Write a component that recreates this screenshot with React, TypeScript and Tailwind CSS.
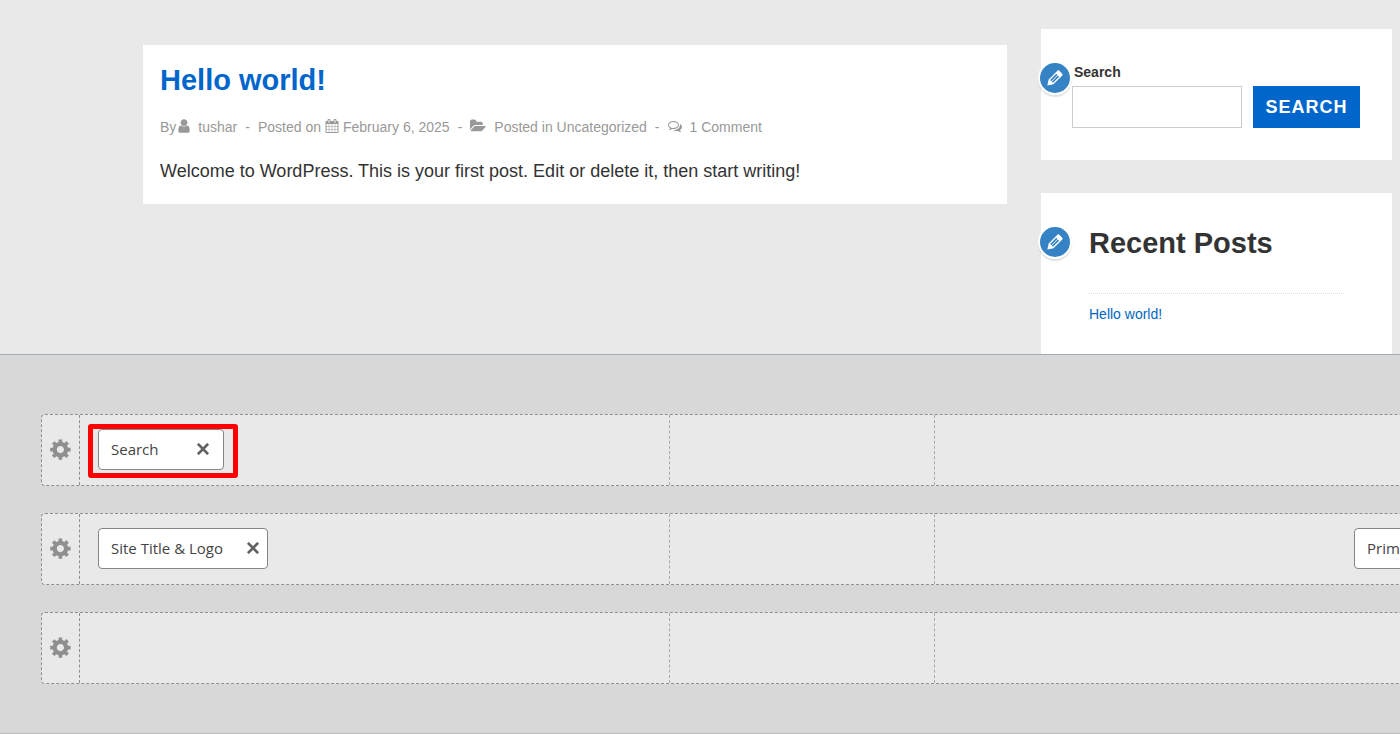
import type { ReactNode } from "react";
import clsx from "clsx";

function Icon({ path, size, box, className }: { path: string; size: number; box: string; className?: string }) {
  return (
    <svg viewBox={box} width={size} height={size} fill="currentColor" aria-hidden="true" className={clsx("shrink-0", className)}>
      <path d={path} />
    </svg>
  );
}

const META_BOX = "0 0 1792 1792";
const DASH_BOX = "0 0 20 20";

const USER =
  "M1536 1399q0 109-62.5 187t-150.5 78h-854q-88 0-150.5-78t-62.5-187q0-85 8.5-160.5t31.5-152 58.5-131 94-89 134.5-34.5q131 128 313 128t313-128q76 0 134.5 34.5t94 89 58.5 131 31.5 152 8.5 160.5zm-256-887q0 159-112.5 271.5t-271.5 112.5-271.5-112.5-112.5-271.5 112.5-271.5 271.5-112.5 271.5 112.5 112.5 271.5z";
const CALENDAR =
  "M192 1664h288v-288h-288v288zm352 0h320v-288h-320v288zm-352-352h288v-320h-288v320zm352 0h320v-320h-320v320zm-352-384h288v-288h-288v288zm736 736h320v-288h-320v288zm-384-736h320v-288h-320v288zm768 736h288v-288h-288v288zm-384-352h320v-320h-320v320zm-352-864v-288q0-13-9.5-22.5t-22.5-9.5h-64q-13 0-22.5 9.5t-9.5 22.5v288q0 13 9.5 22.5t22.5 9.5h64q13 0 22.5-9.5t9.5-22.5zm736 864h288v-320h-288v320zm-384-384h320v-288h-320v288zm384 0h288v-288h-288v288zm32-480v-288q0-13-9.5-22.5t-22.5-9.5h-64q-13 0-22.5 9.5t-9.5 22.5v288q0 13 9.5 22.5t22.5 9.5h64q13 0 22.5-9.5t9.5-22.5zm384-64v1280q0 52-38 90t-90 38h-1408q-52 0-90-38t-38-90v-1280q0-52 38-90t90-38h128v-96q0-66 47-113t113-47h64q66 0 113 47t47 113v96h384v-96q0-66 47-113t113-47h64q66 0 113 47t47 113v96h128q52 0 90 38t38 90z";
const FOLDER =
  "M1879 952q0 31-31 66l-336 396q-43 51-120.5 86.5t-143.5 35.5h-1088q-34 0-60.5-13t-26.5-43q0-31 31-66l336-396q43-51 120.5-86.5t143.5-35.5h1088q34 0 60.5 13t26.5 43zm-343-344v160h-832q-94 0-197 47.5t-164 119.5l-337 396-5 6q0-4-.5-12.5t-.5-12.5v-960q0-92 66-158t158-66h320q92 0 158 66t66 158v32h544q92 0 158 66t66 158z";
const COMMENTS =
  "M704 384q-153 0-286 52t-211.5 141-78.5 191q0 82 53 158t149 132l97 56-35 84q34-20 62-39l44-31 53 10q78 14 153 14 153 0 286-52t211.5-141 78.5-191-78.5-191-211.5-141-286-52zm0-128q191 0 353.5 68.5t256.5 186.5 94 257-94 257-256.5 186.5-353.5 68.5q-86 0-176-16-124 88-278 128-36 9-86 16h-3q-11 0-20.5-8t-11.5-21q-1-3-1-6.5t.5-6.5 2-6l2.5-5 3.5-5.5 4-5 4.5-5 4-4.5q5-6 23-25t26-29.5 22.5-29 25-38.5 20.5-44q-124-72-195-177t-71-224q0-139 94-257t256.5-186.5 353.5-68.5zm822 1169q10 24 20.5 44t25 38.5 22.5 29 26 29.5 23 25q1 1 4 4.5t4.5 5 4 5 3.5 5.5l2.5 5 2 6 .5 6.5-1 6.5q-3 14-13 22t-22 7q-50-7-86-16-154-40-278-128-90 16-176 16-271 0-472-132 58 4 88 4 161 0 309-45t264-129q125-92 192-212t67-254q0-77-23-152 129 71 204 178t75 230q0 120-71 224.5t-195 176.5z";
const GEAR =
  "M18 12h-2.18c-.17.7-.44 1.35-.81 1.93l1.54 1.54-2.1 2.1-1.54-1.54c-.58.36-1.23.63-1.91.79V19H8v-2.18c-.68-.16-1.33-.43-1.91-.79l-1.54 1.54-2.12-2.12 1.54-1.54c-.36-.58-.63-1.23-.79-1.91H1V9.03h2.17c.16-.7.44-1.35.8-1.94L2.43 5.55l2.1-2.1 1.54 1.54c.58-.37 1.24-.64 1.93-.81V2h3v2.18c.68.16 1.33.43 1.91.79l1.54-1.54 2.12 2.12-1.54 1.54c.36.59.64 1.24.8 1.94H18V12zm-8.5 1.5c1.66 0 3-1.34 3-3s-1.34-3-3-3-3 1.34-3 3 1.34 3 3 3z";
const CLOSE =
  "M14.95 6.46L11.41 10l3.54 3.54-1.41 1.41L10 11.42l-3.53 3.53-1.42-1.42L8.58 10 5.05 6.47l1.42-1.42L10 8.58l3.54-3.53z";
const PENCIL =
  "M13.89 3.39l2.71 2.72c.46.46.42 1.24.03 1.64l-8.01 8.02-5.56 1.16 1.16-5.58s7.6-7.63 7.99-8.03c.39-.39 1.22-.39 1.68.07zm-2.73 2.79l-5.59 5.61 1.11 1.11 5.54-5.65zm-2.97 8.23l5.58-5.6-1.07-1.08-5.59 5.6z";

function EditShortcut({ label }: { label: string }) {
  return (
    <button
      type="button"
      aria-label={label}
      className="absolute top-8 -left-[3px] flex size-[34px] items-center justify-center rounded-full border-2 border-white bg-[#3582c4] text-white shadow-[0_2px_1px_rgba(46,68,83,0.15)]"
    >
      <Icon path={PENCIL} size={22} box={DASH_BOX} />
    </button>
  );
}

function Post() {
  return (
    <article className="min-w-0 flex-1 self-start bg-white px-[17px] pt-4 pb-[18px]">
      <h2 className="text-[29px] leading-[38px] font-bold text-[#0066cc]">
        <a href="#post">Hello world!</a>
      </h2>
      <div className="mt-4 flex items-center text-sm leading-6 whitespace-nowrap text-[#999]">
        <span>By</span>
        <Icon path={USER} size={16} box={META_BOX} className="mb-0.5" />
        <a href="#author" className="ml-1.5">
          tushar
        </a>
        <span className="mx-2">-</span>
        <span>Posted on</span>
        <Icon path={CALENDAR} size={14} box={META_BOX} className="mx-1 mb-0.5" />
        <a href="#date">February 6, 2025</a>
        <span className="mx-2">-</span>
        <Icon path={FOLDER} size={16} box="0 0 1920 1792" className="mr-2 mb-0.5" />
        <span>
          Posted in <a href="#category">Uncategorized</a>
        </span>
        <span className="mx-2">-</span>
        <Icon path={COMMENTS} size={14} box={META_BOX} className="mr-2 mb-0.5" />
        <a href="#comments">1 Comment</a>
      </div>
      <p className="mt-[18px] text-lg leading-[29px] text-[#333]">
        Welcome to WordPress. This is your first post. Edit or delete it, then start writing!
      </p>
    </article>
  );
}

function Sidebar() {
  return (
    <aside className="flex w-[351px] shrink-0 flex-col gap-[33px]">
      <section className="relative h-[131px] bg-white pt-8 pr-8 pl-[31px]">
        <EditShortcut label="Edit search widget" />
        <form onSubmit={(e) => e.preventDefault()}>
          <label htmlFor="site-search" className="block pl-0.5 text-sm leading-[22px] font-bold text-[#333]">
            Search
          </label>
          <div className="mt-[3px] flex gap-[11px]">
            <input id="site-search" type="search" className="h-[42px] min-w-0 flex-1 border border-[#ccc] bg-white px-3 text-base" />
            <button type="submit" className="h-[42px] w-[107px] bg-[#0066cc] text-lg font-bold tracking-[1px] text-white">
              SEARCH
            </button>
          </div>
        </form>
      </section>
      <section className="relative bg-white px-12 pt-7 pb-16">
        <EditShortcut label="Edit recent posts widget" />
        <h2 className="text-[29px] leading-[44px] font-bold text-[#333]">Recent Posts</h2>
        <ul className="mt-7 border-t border-dotted border-[#ddd] pt-2">
          <li className="text-sm leading-6 text-[#0066bf]">
            <a href="#post">Hello world!</a>
          </li>
        </ul>
      </section>
    </aside>
  );
}

function BuilderItem({ name, className }: { name: string; className?: string }) {
  return (
    <div
      className={clsx(
        "flex h-[41px] shrink-0 items-center justify-between rounded-[4px] border border-[#82878c] bg-white pl-3 text-[15px] whitespace-nowrap text-[#444]",
        className,
      )}
    >
      <span>{name}</span>
      <button type="button" aria-label={`Remove ${name}`} className="mb-0.5 text-[#606060]">
        <Icon path={CLOSE} size={24} box={DASH_BOX} className="stroke-current stroke-[0.2]" />
      </button>
    </div>
  );
}

function BuilderRow({ label, left, right }: { label: string; left?: ReactNode; right?: ReactNode }) {
  return (
    <div className="flex h-[72px] min-w-[1484px] rounded-[4px] border border-dashed border-[#8f8f8f] bg-[#e9e9e9]">
      <button
        type="button"
        aria-label={label}
        className="flex w-[38px] shrink-0 items-center justify-center border-r border-dashed border-[#8f8f8f] pb-0.5 text-[#8f8f8f]"
      >
        <Icon path={GEAR} size={24} box={DASH_BOX} />
      </button>
      <div className="flex flex-1 items-center border-r border-dashed border-[#a7aaad] pb-px pl-[18px]">{left}</div>
      <div className="w-[265px] shrink-0 border-r border-dashed border-[#a7aaad]" />
      <div className="flex flex-1 items-center justify-end pr-[18px] pb-px">{right}</div>
    </div>
  );
}

export default function App() {
  return (
    <div className="flex h-screen flex-col overflow-hidden bg-[#e9e9e9] font-['Liberation_Sans',Arial,sans-serif]">
      <main className="flex min-h-0 flex-1 gap-[34px] overflow-hidden pr-2 pl-[143px]">
        <div className="flex min-w-0 flex-1 pt-[45px]">
          <Post />
        </div>
        <div className="pt-[29px]">
          <Sidebar />
        </div>
      </main>
      <section
        aria-label="Header builder"
        className="relative z-10 flex shrink-0 flex-col gap-[27px] overflow-hidden border-t border-b border-t-[#a0aab2] border-b-[#bbb] bg-[#d8d8d8] pt-[59px] pb-[49px] pl-[41px] font-['Open_Sans','Noto_Sans',sans-serif]"
      >
        <BuilderRow
          label="Top row settings"
          left={
            <div className="relative">
              <BuilderItem name="Search" className="w-[126px] pr-2" />
              <div className="pointer-events-none absolute -top-[5px] -right-[14px] -bottom-2 -left-[10px] rounded-[3px] border-[5px] border-[#f00]" />
            </div>
          }
        />
        <BuilderRow
          label="Main row settings"
          left={<BuilderItem name="Site Title & Logo" className="w-[170px] pr-0.5" />}
          right={<BuilderItem name="Primary Menu" className="w-[152px] pr-0.5" />}
        />
        <BuilderRow label="Bottom row settings" />
      </section>
    </div>
  );
}
